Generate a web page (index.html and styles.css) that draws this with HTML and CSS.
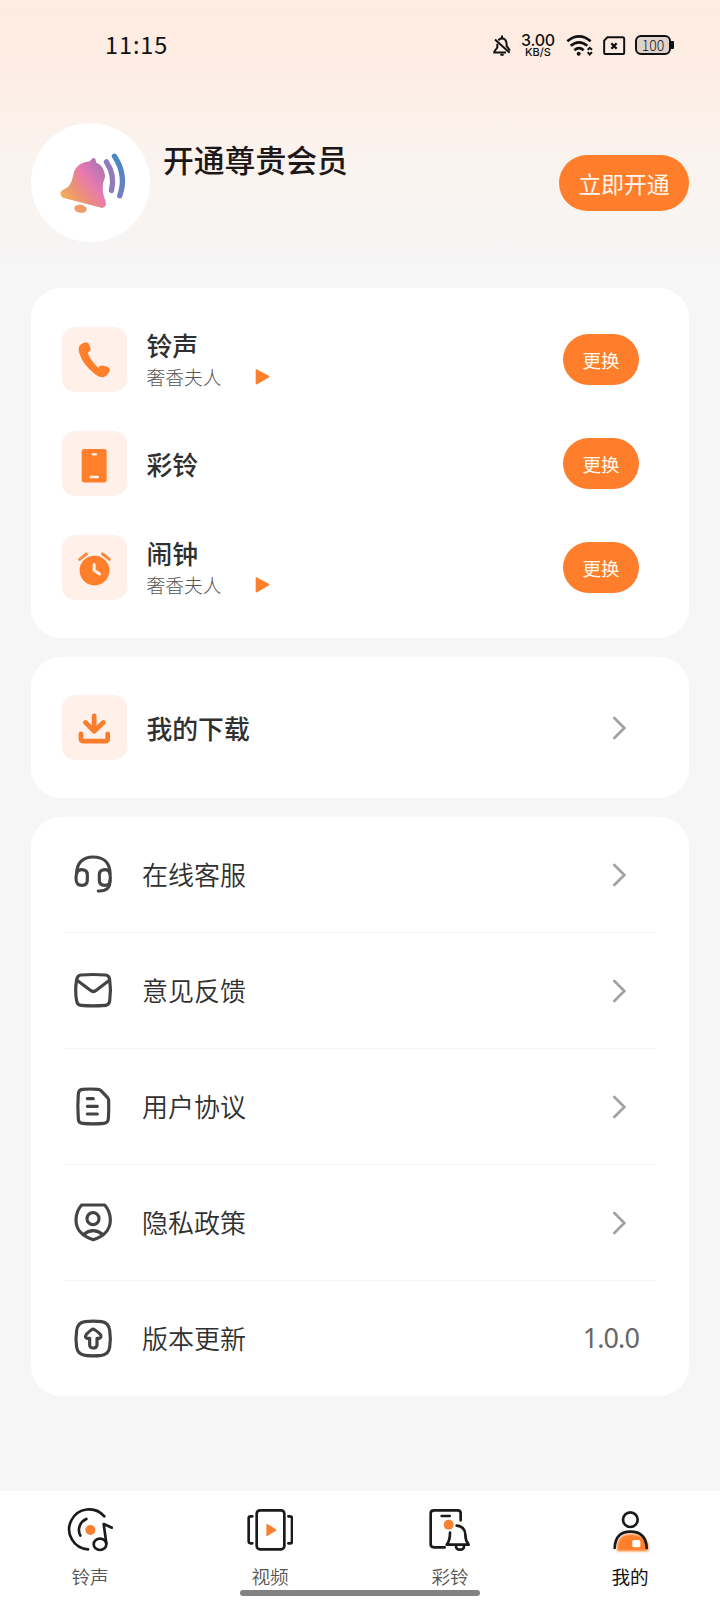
FILE: index.html
```html
<!DOCTYPE html>
<html lang="zh-CN">
<head>
<meta charset="utf-8">
<title>我的</title>
<link rel="stylesheet" href="styles.css">
</head>
<body>
<div class="screen">
  <header class="status">
    <span class="clock">11:15</span>
    <div class="status-right">
      <svg class="st-mute" viewBox="398 100 60 68" fill="none" stroke="#111" stroke-width="6"><path d="M414 129V140L405 152V155H440M417 118Q428 108 438 117Q442 122 442 136L452 149M407 116L451 156"/><path d="M428 104V112M423 162H433"/></svg>
      <div class="speed"><b>3.00</b><small>KB/S</small></div>
      <svg class="st-wifi" viewBox="620 100 84 68" fill="none" stroke="#111" stroke-width="8"><path d="M624 121Q659 92 694 121M634 135Q659 114 684 135M645 148Q659 136 673 148"/><circle cx="658" cy="159" r="6" fill="#111" stroke="none"/><path d="M685 147L691 141L698 147M685 154L691 161L698 154" stroke-width="6"/></svg>
      <svg class="st-sim" viewBox="726 102 72 64" fill="none" stroke="#111" stroke-width="6"><path d="M742 109H788Q793 109 793 114V155Q793 160 788 160H737Q732 160 732 155V119Z"/><path d="M754 127L770 144M770 127L754 144" stroke-width="7"/></svg>
      <div class="battery"><span>100</span></div>
    </div>
  </header>

  <section class="profile">
    <div class="avatar">
      <svg viewBox="93 366 358 358">
        <defs>
          <linearGradient id="bell" x1="190" y1="590" x2="315" y2="490" gradientUnits="userSpaceOnUse"><stop offset="0" stop-color="#f4ae55"/><stop offset=".3" stop-color="#eb9078"/><stop offset=".6" stop-color="#e779b2"/><stop offset="1" stop-color="#a273b0"/></linearGradient>
          <linearGradient id="wave" x1="320" y1="590" x2="375" y2="470" gradientUnits="userSpaceOnUse"><stop offset="0" stop-color="#7d7cc0"/><stop offset="1" stop-color="#4388c8"/></linearGradient>
        </defs>
        <path d="M275 476Q280 467 287 475L289 485Q314 496 316 528Q301 563 316 598Q324 618 307 622L189 591Q175 579 187 568Q212 562 219 528Q224 486 268 482Z" fill="url(#bell)"/>
        <ellipse cx="242" cy="624" rx="19" ry="12" transform="rotate(10 242 624)" fill="#ef9b64"/>
        <path d="M320 483Q347 523 335 569" fill="none" stroke="#9179bd" stroke-width="16" stroke-linecap="round"/>
        <path d="M344 466Q382 523 360 585" fill="none" stroke="url(#wave)" stroke-width="16" stroke-linecap="round"/>
      </svg>
    </div>
    <h1 class="member-title">开通尊贵会员</h1>
    <button class="btn-open">立即开通</button>
  </section>

  <main class="cards">
    <section class="card tones">
      <div class="tone">
        <div class="tile"><svg viewBox="128 142 192 192"><path d="M181 196Q191 186 201 188Q208 190 209 196L213 208Q213 214 204 218Q212 241 235 262Q240 254 249 256L263 260Q271 264 269 272Q263 285 252 290Q241 293 225 281Q189 253 179 219Q175 204 181 196Z" fill="#ff7f2b"/></svg></div>
        <div class="tone-text"><h2>铃声</h2><p>奢香夫人<svg class="play" viewBox="705 266 45 54"><path d="M710 273L745 292L710 312Z" fill="#ff7f2b" stroke="#ff7f2b" stroke-width="6" stroke-linejoin="round"/></svg></p></div>
        <button class="btn-change">更换</button>
      </div>
      <div class="tone">
        <div class="tile"><svg viewBox="128 454 192 192"><rect x="186" y="507" width="74" height="99" rx="8" fill="#ff7f2b"/><path d="M219 523H228M213 590H234" stroke="#fff1e9" stroke-width="7" stroke-linecap="round"/></svg></div>
        <div class="tone-text"><h2>彩铃</h2></div>
        <button class="btn-change">更换</button>
      </div>
      <div class="tone">
        <div class="tile"><svg viewBox="128 766 192 192" fill="none" stroke-linecap="round"><circle cx="224" cy="871" r="44" fill="#ff7f2b"/><path d="M180 838L200 822M248 822L268 838" stroke="#f98a45" stroke-width="9"/><path d="M223 853V870L239 881" stroke="#fff1e9" stroke-width="9"/></svg></div>
        <div class="tone-text"><h2>闹钟</h2><p>奢香夫人<svg class="play" viewBox="705 266 45 54"><path d="M710 273L745 292L710 312Z" fill="#ff7f2b" stroke="#ff7f2b" stroke-width="6" stroke-linejoin="round"/></svg></p></div>
        <button class="btn-change">更换</button>
      </div>
    </section>

    <section class="card download">
      <div class="tile"><svg viewBox="128 166 192 192" fill="none" stroke="#f97d2c" stroke-width="14" stroke-linecap="round" stroke-linejoin="round"><path d="M223 228V272M197 247L223 273L250 247"/><path d="M184 281V295Q184 302 191 302H256Q263 302 263 295V281"/></svg></div>
      <h2>我的下载</h2>
      <svg class="chevron" viewBox="395 228 42 72"><path d="M402 234L432 264L402 294"/></svg>
    </section>

    <section class="card menu">
      <div class="item">
        <svg class="icon" viewBox="154 640 126 126"><path d="M168 702C168 671 186 652 217 652C250 652 268 671 268 702"/><path d="M166 714C166 697 171 690 182 690C194 690 200 695 200 705V722C200 732 194 737 184 737C171 737 166 731 166 714ZM269 714C269 697 265 690 254 690C242 690 236 695 236 705V722C236 732 242 737 252 737C265 737 269 731 269 714Z"/><path d="M268 722Q269 756 233 754"/></svg>
        <span class="label">在线客服</span>
        <svg class="chevron" viewBox="395 228 42 72"><path d="M402 234L432 264L402 294"/></svg>
      </div>
      <div class="item">
        <svg class="icon" viewBox="154 117 126 126"><path d="M181 135Q217 132 254 135Q266 136 267 149Q272 181 267 213Q265 225 254 226Q217 229 181 226Q170 225 168 213Q162 181 168 149Q170 136 181 135Z"/><path d="M169 151L209 181Q218 188 227 181L266 151"/></svg>
        <span class="label">意见反馈</span>
        <svg class="chevron" viewBox="395 228 42 72"><path d="M402 234L432 264L402 294"/></svg>
      </div>
      <div class="item">
        <svg class="icon" viewBox="154 465 126 126"><path d="M185 478Q209 476 232 478Q237 478 241 482L260 502Q264 507 264 511Q265 541 263 567Q262 579 250 580Q217 583 185 580Q173 579 173 567Q170 529 173 491Q174 479 185 478Z"/><path d="M200 506H218M200 529H230M200 552H230"/></svg>
        <span class="label">用户协议</span>
        <svg class="chevron" viewBox="395 228 42 72"><path d="M402 234L432 264L402 294"/></svg>
      </div>
      <div class="item">
        <svg class="icon" viewBox="154 93 126 126"><path d="M183 105H252Q269 123 269 151C269 180 248 200 218 209C187 200 166 180 166 151Q166 123 183 105Z"/><circle cx="217" cy="146" r="18"/><path d="M188 194Q217 170 247 194"/></svg>
        <span class="label">隐私政策</span>
        <svg class="chevron" viewBox="395 228 42 72"><path d="M402 234L432 264L402 294"/></svg>
      </div>
      <div class="item">
        <svg class="icon" viewBox="154 441 126 126"><path d="M193 455Q218 452 243 455Q264 458 267 481Q271 506 267 532Q264 553 243 556Q218 559 193 556Q171 553 168 532Q164 506 168 481Q171 458 193 455Z"/><path d="M217 477Q223 478 239 493Q244 502 236 505H229V526Q227 534 218 534Q208 534 207 526V505H199Q191 502 197 493Q212 478 217 477Z"/></svg>
        <span class="label">版本更新</span>
        <span class="version">1.0.0</span>
      </div>
    </section>
  </main>

  <nav class="tabs">
    <a class="tab">
      <svg viewBox="200 78 140 144"><g class="line"><path d="M312 109A60 60 0 1 0 263 208M258 117A36 36 0 0 0 240 167"/><ellipse cx="299" cy="193" rx="19" ry="17"/><path d="M318 190L310 132L335 143"/></g><circle cx="270" cy="150" r="15" fill="#f98032"/></svg>
      <span>铃声</span>
    </a>
    <a class="tab">
      <svg viewBox="740 78 140 144"><g class="line"><rect x="769" y="91" width="83" height="117" rx="10"/><path d="M756 109H751Q745 109 745 115V184Q745 190 751 190H756M864 109H869Q875 109 875 115V184Q875 190 869 190H864"/></g><path d="M801 135L825 150L801 165Z" fill="#f98032" stroke="#f98032" stroke-width="6" stroke-linejoin="round"/></svg>
      <span>视频</span>
    </a>
    <a class="tab">
      <svg viewBox="200 78 140 144"><g class="line"><path d="M301 121V100Q301 91 292 91H221Q211 91 211 100V193Q211 202 221 202H253M244 108H268"/><path d="M289 137Q314 139 315 164Q315 181 325 194H259Q269 182 269 158M287 196Q286 209 299 209Q312 209 311 196"/></g><circle cx="265" cy="134" r="15" fill="#f98032"/></svg>
      <span>彩铃</span>
    </a>
    <a class="tab active">
      <svg viewBox="740 78 140 144"><defs><filter id="glow" x="-20%" y="-20%" width="140%" height="140%"><feGaussianBlur stdDeviation="3"/></filter></defs><path d="M770 214V197Q775 162 810 162Q855 162 864 195V214Z" fill="#ff7f2b" filter="url(#glow)"/><g class="line"><circle cx="810" cy="119" r="22"/><path d="M763 204Q765 155 810 155Q857 155 859 204"/></g><rect x="816" y="180" width="24" height="22" rx="5" fill="#fff"/></svg>
      <span>我的</span>
    </a>
    <div class="home-bar"></div>
  </nav>
</div>
</body>
</html>
```
FILE: styles.css
```css
* { box-sizing: border-box; }
body, h1, h2, p { margin: 0; }
body { background: #f6f6f6; font-family: "Noto Sans CJK SC", "Noto Sans", sans-serif; color: #303030; }
svg { display: block; flex: none; }
button { border: 0; padding: 0; background: #ff7e2b; color: #fff8ee; font-family: inherit; }

.screen {
  width: 720px;
  height: 1600px;
  display: flex;
  flex-direction: column;
  background: linear-gradient(#ffebe0 0, #fdede4 70px, #fbf2ed 140px, #f6f6f6 270px);
}

.status { height: 90px; padding: 0 49px 0 105px; display: flex; align-items: center; justify-content: space-between; color: #111; }
.clock { margin-top: -2px; font-size: 23.5px; line-height: 30px; letter-spacing: 0.9px; }
.status-right { display: flex; align-items: center; }
.st-mute { width: 20px; height: 23px; }
.speed { width: 34px; margin-left: 9px; display: flex; flex-direction: column; align-items: center; font-family: Inter, sans-serif; }
.speed b { font-size: 16px; line-height: 14px; font-weight: 500; letter-spacing: -0.2px; }
.speed small { font-size: 11px; line-height: 11px; font-weight: 500; }
.st-wifi { width: 28px; height: 23px; margin-left: 11px; }
.st-sim { width: 24px; height: 21px; margin-left: 8px; }
.battery { position: relative; width: 36px; height: 20px; margin-left: 9px; border: 2px solid #111; border-radius: 6px; background: #dfd1cb; display: flex; align-items: center; justify-content: center; font-size: 14px; line-height: 16px; font-weight: 300; }
.battery::after { content: ""; position: absolute; right: -5px; top: 4px; width: 3px; height: 8px; background: #111; border-radius: 0 1px 1px 0; }

.profile { height: 198px; padding: 32px 31px 0; display: flex; align-items: flex-start; }
.avatar { width: 119px; height: 119px; margin-top: 1px; border-radius: 50%; background: #fff; overflow: hidden; }
.avatar svg { width: 119px; height: 119px; }
.member-title { flex: 1; margin: 15px 0 0 13px; font-size: 30.8px; line-height: 44px; font-weight: 500; color: #1d1817; }
.btn-open { width: 130px; height: 56px; margin-top: 33px; border-radius: 28px; font-size: 22.8px; line-height: 57px; }

.cards { padding: 0 31px; display: flex; flex-direction: column; gap: 19px; }
.card { background: #fff; border-radius: 30px; }
.card h2 { font-size: 25.8px; line-height: 34px; font-weight: 500; }
.tones { height: 350px; padding: 39px 50px 0 31px; display: flex; flex-direction: column; gap: 39px; }
.tone { height: 65px; display: flex; align-items: center; }
.tile { width: 65px; height: 65px; border-radius: 13px; background: #fff1e9; flex: none; }
.tile svg { width: 65px; height: 65px; }
.tone-text { flex: 1; margin-left: 19.5px; }
.tone-text p { display: flex; align-items: center; margin-top: 1px; font-size: 18.8px; line-height: 28px; font-weight: 300; color: #555; }
.play { width: 15px; height: 18px; margin-left: 33px; }
.btn-change { width: 76px; height: 51px; border-radius: 26px; font-size: 18.5px; line-height: 52px; }

.download { height: 141px; padding: 0 63px 0 31px; display: flex; align-items: center; }
.download h2 { flex: 1; margin-left: 19.5px; }
.chevron { width: 14px; height: 24px; fill: none; stroke: #a2a1a8; stroke-width: 8; stroke-linecap: round; }

.menu { height: 579px; padding: 0 33px; }
.item { height: 116px; padding: 0 30px 0 7px; display: flex; align-items: center; border-bottom: 1px solid #f4f4f4; }
.item:last-child { height: 115px; padding-right: 17px; border-bottom: 0; }
.icon { width: 42px; height: 42px; margin: -1px 0 0 0.5px; fill: none; stroke: #444; stroke-width: 9.5; stroke-linecap: round; stroke-linejoin: round; }
.label { flex: 1; margin: -1px 0 0 28.5px; font-size: 26px; line-height: 36px; font-weight: 350; }
.version { margin-top: -1px; font-family: "Noto Sans", sans-serif; font-size: 27px; line-height: 36px; letter-spacing: -0.9px; color: #666; font-weight: 400; }

.tabs { position: relative; margin-top: auto; height: 109px; padding-top: 15px; display: grid; grid-template-columns: repeat(4, 1fr); background: #fff; }
.tab { display: flex; flex-direction: column; align-items: center; font-size: 18.6px; line-height: 24px; font-weight: 350; color: #555; }
.tab svg { width: 46.7px; height: 48px; }
.tab span { margin-top: 10px; }
.tab.active { color: #111; font-weight: 400; }
.line { fill: none; stroke: #1b1b1b; stroke-width: 8; stroke-linecap: round; stroke-linejoin: round; }
.home-bar { position: absolute; left: 240px; bottom: 4px; width: 240px; height: 6px; border-radius: 3px; background: #828282; }
```
